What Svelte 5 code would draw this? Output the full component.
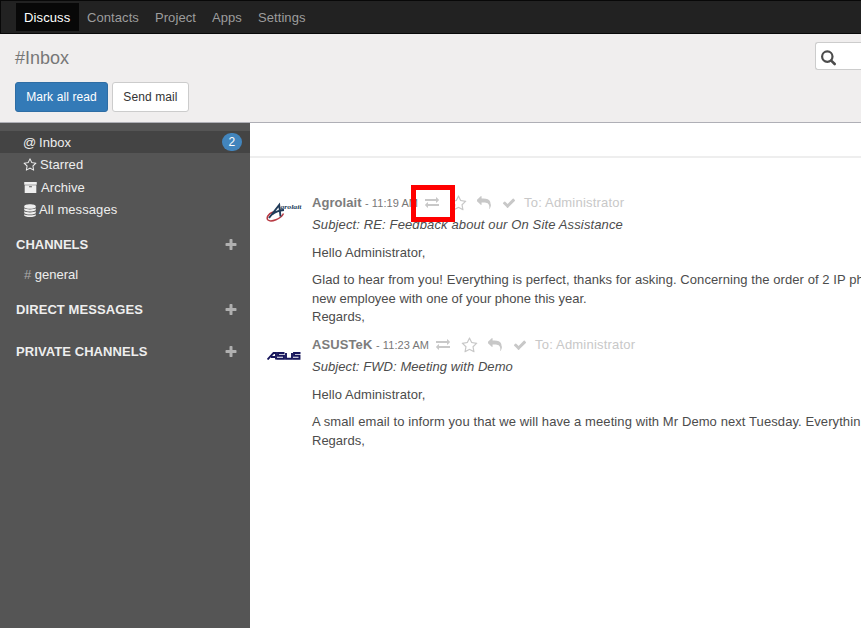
<script>
  const nav = ['Discuss', 'Contacts', 'Project', 'Apps', 'Settings'];
  const boxes = [
    { icon: 'at', name: 'Inbox', count: 2 },
    { icon: 'star', name: 'Starred' },
    { icon: 'archive', name: 'Archive' },
    { icon: 'database', name: 'All messages' },
  ];
  const messages = [
    {
      logo: 'agrolait', author: 'Agrolait', time: '11:19 AM', marked: true,
      subject: 'Subject: RE: Feedback about our On Site Assistance',
      lines: ['Glad to hear from you! Everything is perfect, thanks for asking. Concerning the order of 2 IP ph', 'new employee with one of your phone this year.', 'Regards,'],
    },
    {
      logo: 'asus', author: 'ASUSTeK', time: '11:23 AM', marked: false,
      subject: 'Subject: FWD: Meeting with Demo',
      lines: ['A small email to inform you that we will have a meeting with Mr Demo next Tuesday. Everythin', 'Regards,'],
    },
  ];
  const paths = {
    exchange: 'M1792 1184v192q0 13-9.5 22.5t-22.5 9.5h-1376v192q0 13-9.5 22.5t-22.5 9.5q-12 0-24-10l-319-320q-9-9-9-22 0-14 9-23l320-320q9-9 23-9 13 0 22.5 9.5t9.5 22.5v192h1376q13 0 22.5 9.5t9.5 22.5zm0-544q0 14-9 23l-320 320q-9 9-23 9-13 0-22.5-9.5t-9.5-22.5v-192h-1376q-13 0-22.5-9.5t-9.5-22.5v-192q0-13 9.5-22.5t22.5-9.5h1376v-192q0-14 9-23t23-9q12 0 24 10l319 319q9 9 9 23z',
    star: 'M1201 1004l306-297-422-62-189-382-189 382-422 62 306 297-73 421 378-199 377 199zm527-357q0 22-26 48l-363 354 86 500q1 7 1 20 0 50-41 50-19 0-40-12l-449-236-449 236q-22 12-40 12-21 0-31.5-14.5t-10.5-35.5q0-6 2-20l86-500-364-354q-25-27-25-48 0-37 56-46l502-73 225-455q19-41 49-41t49 41l225 455 502 73q56 9 56 46z',
    reply: 'M1792 1120q0 166-127 451-3 7-10.5 24t-13.5 30-13 22q-12 17-28 17-15 0-23.5-10t-8.5-25q0-9 2.5-26.5t2.5-23.5q5-68 5-123 0-112-19.5-200.5t-54-153.5-89-112-116.5-79-144-48.5-162-24-184-6.5h-224v256q0 26-19 45t-45 19-45-19l-512-512q-19-19-19-45t19-45l512-512q19-19 45-19t45 19 19 45v256h224q713 0 875 403 53 134 53 333z',
    check: 'M1671 566q0 40-28 68l-724 724-136 136q-28 28-68 28t-68-28l-136-136-362-362q-28-28-28-68t28-68l136-136q28-28 68-28t68 28l294 295 656-657q28-28 68-28t68 28l136 136q28 28 28 68z',
    plus: 'M1600 736v192q0 40-28 68t-68 28h-416v416q0 40-28 68t-68 28h-192q-40 0-68-28t-28-68v-416h-416q-40 0-68-28t-28-68v-192q0-40 28-68t68-28h416v-416q0-40 28-68t68-28h192q40 0 68 28t28 68v416h416q40 0 68 28t28 68z',
    archive: 'M32 128h1728v384H32zM96 590h1600v1070H96zM704 740v128h384v-128z',
    database: 'M32 310C32 -80 1760 -80 1760 310v90c0 330-1728 330-1728 0zM32 600c300 210 1428 210 1728 0v190c0 330-1728 330-1728 0zM32 1000c300 210 1428 210 1728 0v190c0 330-1728 330-1728 0zM32 1400c300 210 1428 210 1728 0v140c0 330-1728 330-1728 0z',
  };
</script>

{#snippet icon(name, cls)}
  <svg class="icon {cls}" viewBox="0 0 1792 1792" preserveAspectRatio={name === 'database' ? 'none' : 'xMidYMid'}><path fill="currentColor" fill-rule={name === 'archive' ? 'evenodd' : 'nonzero'} d={paths[name]} /></svg>
{/snippet}

<div class="app">
  <nav>
    {#each nav as item, i}
      <a class:active={i === 0}>{item}</a>
    {/each}
  </nav>
  <header>
    <div class="left">
      <h1>#Inbox</h1>
      <div class="buttons">
        <button class="primary">Mark all read</button>
        <button>Send mail</button>
      </div>
    </div>
    <div class="search">
      <svg width="16" height="16" viewBox="0 0 16 16" fill="none" stroke="#4c4c4c"><circle cx="6.3" cy="6.6" r="5.2" stroke-width="2.2" /><path d="M10.2 10.6l3.5 3.4" stroke-width="2.6" stroke-linecap="round" /></svg>
    </div>
  </header>
  <div class="body">
    <aside>
      {#each boxes as box}
        <div class="box {box.icon}" class:selected={box.count}>
          {#if box.icon === 'at'}<span class="glyph">@</span>{:else}{@render icon(box.icon, 'side')}{/if}
          <span class="name">{box.name}</span>
          {#if box.count}<span class="badge">{box.count}</span>{/if}
        </div>
      {/each}
      <div class="section first"><b>CHANNELS</b>{@render icon('plus', 'plus')}</div>
      <div class="channel"><i>#</i> general</div>
      <div class="section second"><b>DIRECT MESSAGES</b>{@render icon('plus', 'plus')}</div>
      <div class="section third"><b>PRIVATE CHANNELS</b>{@render icon('plus', 'plus')}</div>
    </aside>
    <main>
      <div class="strip"></div>
      {#each messages as m}
        <article class={m.logo}>
          <div class="avatar">
            {#if m.logo === 'agrolait'}
              <svg width="36" height="20" viewBox="0 0 36 20">
                <path d="M7 10C2 12 0 16 2 18C5 20.5 15 17 17.5 11.5" fill="none" stroke="#b83942" stroke-width="1.5" />
                <path d="M3 16L13.2 3L14.5 14.5M6 12.5Q11 8.5 18 8" fill="none" stroke="#203b59" stroke-width="1.9" />
                <text x="14.5" y="7.3" textLength="21" lengthAdjust="spacingAndGlyphs" class="script">grolait</text>
              </svg>
            {:else}
              <svg class="wordmark" width="34" height="8" viewBox="0 0 34 8" fill="none" stroke="#17165c" stroke-width="1.9">
                <path d="M.5 7.5L6.5 1H9V7.5M4 5H8M17.5 1H11V3.8H17V6.8H9.5M19 1V6.8H25V1M33.5 1H27V3.8H32.5V6.8H26" />
              </svg>
            {/if}
          </div>
          <div class="content">
            <div class="meta">
              <b>{m.author}</b><small>- {m.time}</small>
              <span class="swap">{@render icon('exchange', 'exchange')}{#if m.marked}<span class="marker"></span>{/if}</span>
              {@render icon('star', 'favorite')}
              {@render icon('reply', 'reply')}
              {@render icon('check', 'check')}
              <span class="to">To: Administrator</span>
            </div>
            <div class="subject">{m.subject}</div>
            <p class="hello">Hello Administrator,</p>
            <p>{#each m.lines as line, i}<span class="line" class:long={i === 0}>{line}</span>{/each}</p>
          </div>
        </article>
      {/each}
    </main>
  </div>
</div>

<style>
  :global(body) { overflow: hidden; }
  * { box-sizing: border-box; }
  .app { width: 861px; height: 628px; overflow: hidden; display: flex; flex-direction: column; background: #fff; font: 13px/18px "Liberation Sans", Arial, sans-serif; color: #4c4c4c; white-space: nowrap; }
  nav { height: 34px; flex: none; background: #222; border: 1px solid #080808; border-right: 0; padding: 2px 0 0 15px; display: flex; }
  nav a { height: 28px; padding: 0 8px; line-height: 29px; color: #9d9d9d; letter-spacing: .08px; }
  nav a.active { background: #080808; color: #fff; width: 63px; letter-spacing: .12px; }
  header { height: 89px; flex: none; background: #f0eeee; border-bottom: 1px solid #afafb6; display: flex; justify-content: space-between; }
  .left { padding: 14px 0 0 15px; }
  h1 { margin: 0; font-size: 18px; line-height: 20px; font-weight: 400; color: #777; }
  .buttons { display: flex; gap: 4px; margin-top: 14px; }
  button { height: 30px; width: 77px; padding: 0; border: 1px solid #ccc; border-radius: 3px; background: #fff; color: #333; font: 12px/18px "Liberation Sans", Arial, sans-serif; letter-spacing: .1px; }
  button.primary { width: 93px; background: #337ab7; border-color: #2e6da4; color: #fff; }
  .search { width: 46px; height: 28px; margin-top: 8px; border: 1px solid #ccc; border-right: 0; border-radius: 3px 0 0 3px; background: #fff; padding: 7px 0 0 5px; }
  .search svg { display: block; }
  .body { flex: 1; display: flex; min-height: 0; }
  aside { width: 250px; flex: none; background: #555; padding-top: 8px; color: #eee; }
  .box { display: flex; align-items: center; height: 22px; padding: 0 8px 0 24px; letter-spacing: .08px; }
  .box.at { padding-left: 23px; }
  .box.at .glyph, .box.at .name { padding-top: 2px; }
  .box.star { height: 23px; padding-left: 23px; padding-top: 1px; }
  .box.star .side { width: 14px; height: 14px; }
  .box.archive { height: 22px; padding-top: 1px; }
  .box.database { height: 23px; padding-top: 1px; }
  .box.selected { background: #444; }
  .glyph { width: 16px; }
  .name { flex: 1; }
  .icon { display: block; flex: none; }
  .side { width: 13px; height: 13px; margin-right: 3px; }
  .box.database .side { width: 12px; height: 13px; }
  .archive .name { padding-left: 1px; }
  .badge { width: 20px; height: 18px; border-radius: 9px; background: #4285bd; color: #fff; text-align: center; line-height: 18px; font-size: 12px; }
  .section { display: flex; align-items: center; justify-content: space-between; height: 20px; padding: 0 12px 0 16px; letter-spacing: .08px; }
  .first { margin-top: 14px; letter-spacing: 0; }
  .second { margin-top: 16px; }
  .third { margin-top: 22px; }
  .plus { width: 14px; height: 14px; color: #b0b0b0; }
  .channel { margin-top: 10px; padding-left: 24px; height: 19px; line-height: 19px; }
  i { font-style: normal; color: #aaa; }
  main { flex: 1; min-width: 0; overflow: hidden; }
  .strip { height: 35px; border-bottom: 2px solid #eee; margin-bottom: 35px; }
  article { display: flex; padding-left: 16px; margin-bottom: 9px; }
  .avatar { width: 46px; flex: none; padding-top: 9px; }
  .avatar svg { display: block; }
  .avatar .wordmark { margin: 8px 0 0 1px; }
  .script { font: italic bold 7px "Liberation Serif", serif; fill: #203b59; }
  .meta { display: flex; align-items: center; height: 20px; color: #c8c8c8; }
  .meta b { color: #7c7c7c; width: 53px; letter-spacing: .06px; }
  .asus .meta b { width: 64px; letter-spacing: .1px; }
  small { font-size: 11px; color: #777; width: 60px; letter-spacing: .07px; }
  .swap { position: relative; margin: -1px 11px 0 0; }
  .exchange { width: 14px; height: 14px; margin-top: -1px; }
  .marker { position: absolute; left: -14px; top: -11px; width: 44px; height: 37px; border: 5px solid #f00; }
  .favorite { width: 17px; height: 17px; margin-right: 10px; }
  .reply { width: 14px; height: 14px; margin-right: 11px; }
  .check { width: 14px; height: 14px; margin-right: 8px; }
  .to { letter-spacing: .2px; }
  .subject { font-style: italic; height: 24px; line-height: 24px; letter-spacing: .13px; }
  .asus .subject { letter-spacing: .07px; }
  p { margin: 0; line-height: 18px; }
  .hello { margin: 7px 0 9px; letter-spacing: .07px; }
  .line { display: block; }
  .long { letter-spacing: .075px; margin-bottom: 1px; }
  .asus .long { letter-spacing: .09px; }
</style>
